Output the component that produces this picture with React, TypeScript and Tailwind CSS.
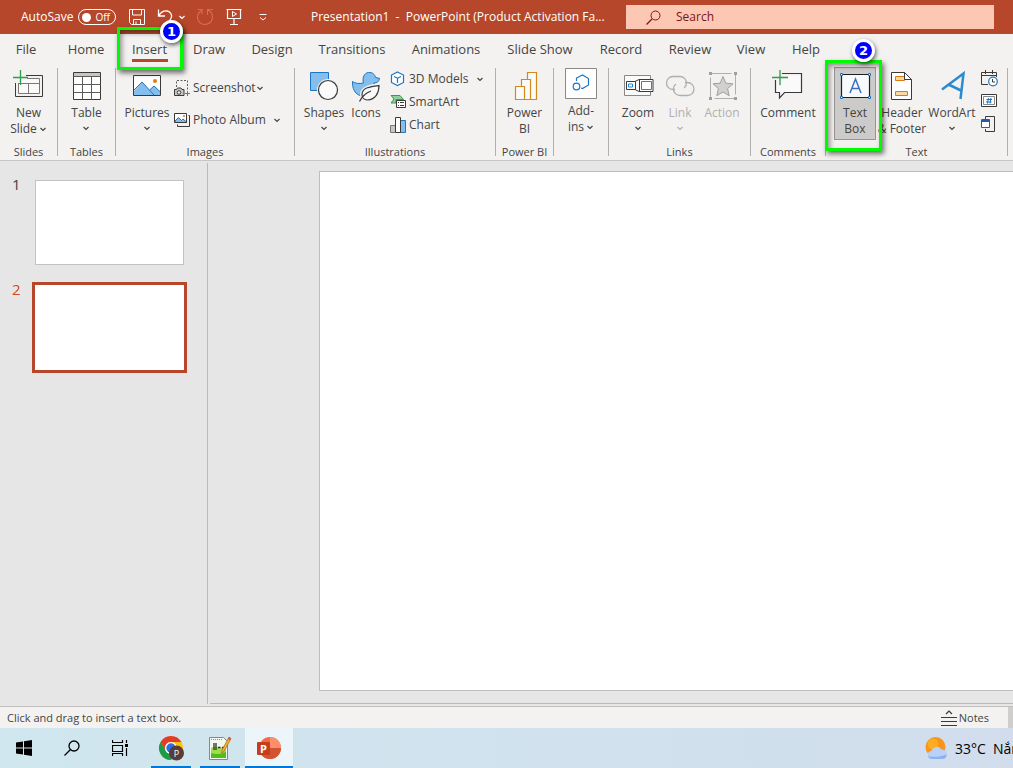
import type { ReactNode } from "react";

type TabItem = Readonly<{ name: string; width: string }>;

const tabs: TabItem[] = [
  { name: "File", width: "w-[52px]" },
  { name: "Home", width: "w-[68px]" },
  { name: "Insert", width: "w-[59px]" },
  { name: "Draw", width: "w-[60px]" },
  { name: "Design", width: "w-[66px]" },
  { name: "Transitions", width: "w-[94px]" },
  { name: "Animations", width: "w-[94px]" },
  { name: "Slide Show", width: "w-[94px]" },
  { name: "Record", width: "w-[68px]" },
  { name: "Review", width: "w-[70px]" },
  { name: "View", width: "w-[52px]" },
  { name: "Help", width: "w-[58px]" },
];

function Chevron({ className = "" }: Readonly<{ className?: string }>) {
  return (
    <svg width="7" height="5" viewBox="0 0 7 5" fill="none" stroke="currentColor" strokeWidth="1.2" className={className} aria-hidden="true">
      <path d="M.5 1l2.500 2.500L5.500 1" />
    </svg>
  );
}

function Icon({ size = 32, children }: Readonly<{ size?: number; children: ReactNode }>) {
  return (
    <svg width={size} height={size} viewBox={`0 0 ${size} ${size}`} fill="none" className="shrink-0" aria-hidden="true">
      {children}
    </svg>
  );
}

function Badge({ value, className }: Readonly<{ value: number; className: string }>) {
  return (
    <span
      className={`absolute z-20 flex size-[23px] items-center justify-center rounded-full border-[3px] border-white bg-[#0000fe] font-['DejaVu_Sans',sans-serif] text-[13px] leading-4 font-bold text-white shadow-[1px_2px_4px_rgba(0,0,0,0.6)] ${className}`}
    >
      {value}
    </span>
  );
}

function Outline({ className }: Readonly<{ className: string }>) {
  return (
    <span
      className={`pointer-events-none absolute z-10 border-[3px] border-[#00fa00] shadow-[2px_3px_5px_rgba(0,0,0,0.55),inset_2px_3px_5px_rgba(0,0,0,0.4)] ${className}`}
    />
  );
}

type GroupProps = Readonly<{ label?: string; width: string; bodyClass?: string; children: ReactNode }>;

function Group({ label, width, bodyClass = "justify-center", children }: GroupProps) {
  return (
    <>
      <section className={`flex shrink-0 flex-col ${width}`}>
        <div className={`flex flex-1 items-start pt-1 ${bodyClass}`}>{children}</div>
        {label ? <h2 className="text-center text-[11px] leading-4 whitespace-nowrap">{label}</h2> : null}
      </section>
      <div className="mt-0.5 mb-1 w-px shrink-0 bg-[#b1b0af]" />
    </>
  );
}

type BigButtonProps = Readonly<{
  icon: ReactNode;
  lines: string[];
  width: string;
  arrow?: "below" | "inline";
  disabled?: boolean;
}>;

function BigButton({ icon, lines, width, arrow, disabled = false }: BigButtonProps) {
  return (
    <button
      type="button"
      disabled={disabled}
      className={`flex shrink-0 flex-col items-center text-[12px] leading-4 whitespace-nowrap disabled:text-[#b1afad] ${width}`}
    >
      {icon}
      <span className="mt-[3px] flex flex-col items-center">
        {lines.map((line, i) => (
          <span key={line} className="flex items-center gap-[3px]">
            {line}
            {arrow === "inline" && i === lines.length - 1 ? <Chevron /> : null}
          </span>
        ))}
      </span>
      {arrow === "below" ? <Chevron className="mt-[5px]" /> : null}
    </button>
  );
}

type SmallButtonProps = Readonly<{ icon: ReactNode; label: string; arrow?: "near" | "far" }>;

function SmallButton({ icon, label, arrow }: SmallButtonProps) {
  return (
    <button type="button" className="flex items-center gap-[3px] text-[12px] leading-4 whitespace-nowrap">
      {icon}
      {label}
      {arrow ? <Chevron className={arrow === "far" ? "ml-[5px]" : "-ml-0.5"} /> : null}
    </button>
  );
}

function TitleBar() {
  return (
    <header className="flex h-[34px] shrink-0 items-center bg-[#b7472a] text-white">
      <span id="autosave" className="ml-[21px] w-[57px] text-[12px]">
        AutoSave
      </span>
      <button
        type="button"
        role="switch"
        aria-checked="false"
        aria-labelledby="autosave"
        className="flex h-4 w-[38px] items-center justify-between rounded-full border border-white pr-[5px] pl-[3px] text-[10px] leading-3"
      >
        <span className="size-[9px] rounded-full bg-white" />
        Off
      </button>
      <button type="button" aria-label="Save" className="ml-[5px] flex w-8 justify-center">
        <Icon size={18}>
          <path d="M1.500 1.500h15v15h-13l-2-2zM4.500 1.500V7h9V1.500M5.500 16.500v-5h7v5M8 16.500v-3" stroke="currentColor" />
        </Icon>
      </button>
      <button type="button" aria-label="Undo" className="flex w-6 justify-center">
        <Icon size={18}>
          <path d="M2.500 1.500V8H9M2.500 8C5 4 8 2.500 11 3c3 .5 5 3 4.500 6-.4 2.500-2.500 4-4.500 6.500" stroke="currentColor" strokeWidth="1.300" />
        </Icon>
      </button>
      <button type="button" aria-label="Undo history" className="flex w-[10px] justify-center">
        <Chevron />
      </button>
      <button type="button" aria-label="Redo" disabled className="flex w-9 justify-center text-[#e0694c]">
        <Icon size={18}>
          <path d="M11.500 7V1.500H17M11.500 2C15 3 16.500 6 16.500 9c0 4-3 7.500-7.500 7.500S1.500 13 1.500 9.500C1.500 6.500 3 4 5.500 2.500M1.500 1.500h4.500v4.500" stroke="currentColor" strokeWidth="1.200" />
        </Icon>
      </button>
      <button type="button" aria-label="Start from beginning" className="flex w-[22px] justify-center">
        <Icon size={18}>
          <path d="M1.500 1.500h15M2.500 1.500v9h13v-9M9 10.500v6M5 16.500h8" stroke="currentColor" strokeWidth="1.200" />
          <path d="M7.500 3.500l4 2.500-4 2.500z" stroke="currentColor" />
        </Icon>
      </button>
      <button type="button" aria-label="Customize toolbar" className="flex w-9 justify-center">
        <svg width="8" height="8" viewBox="0 0 8 8" fill="none" stroke="currentColor" aria-hidden="true">
          <path d="M.5 1.500h7M1 4.500l3 2.500 3-2.500" />
        </svg>
      </button>
      <h1 className="ml-[30px] flex-1 text-[12px] whitespace-pre">Presentation1&nbsp; -&nbsp; PowerPoint (Product Activation Fa...</h1>
      <label className="mr-[19px] flex h-6 w-[368px] items-center bg-[#fcc8b4] pl-5 text-[#7d1416]">
        <Icon size={15}>
          <circle cx="9.500" cy="5.500" r="4.500" stroke="currentColor" />
          <path d="M6 9l-5.500 5.500" stroke="currentColor" strokeWidth="1.200" />
        </Icon>
        <input
          type="search"
          aria-label="Search"
          placeholder="Search"
          className="ml-[15px] min-w-0 flex-1 bg-transparent text-[12px] outline-none placeholder:text-[#7d1416]"
        />
      </label>
    </header>
  );
}

function Tabs() {
  return (
    <nav className="flex h-8 shrink-0 text-[13px]">
      {tabs.map((tab) => (
        <div key={tab.name} className={`relative flex shrink-0 justify-center ${tab.width}`}>
          <button type="button" className="flex flex-col items-center pt-[5px] leading-5 whitespace-nowrap">
            {tab.name}
            {tab.name === "Insert" ? <span className="h-[3px] w-9 bg-[#b7472a]" /> : null}
          </button>
          {tab.name === "Insert" ? (
            <>
              <Outline className="-top-[7px] -left-[3px] h-[43px] w-[66px]" />
              <Badge value={1} className="-top-[14px] left-10" />
            </>
          ) : null}
        </div>
      ))}
    </nav>
  );
}

const newSlideIcon = (
  <Icon>
    <path d="M13 5.500h16.500v21h-27V13" stroke="#3b3a39" />
    <path d="M14 8.500h12.500v15h-21V13M5.500 13.500h21M15.500 13.500v10" stroke="#7a7977" fill="#fafafa" />
    <path d="M0 7.500h15M7.500 0v15" stroke="#2e9e4f" strokeWidth="1.300" />
  </Icon>
);

const tableIcon = (
  <Icon>
    <path d="M2.500 2.500h27v27h-27z" fill="#fff" stroke="#3b3a39" />
    <path d="M3 3h26v3.500H3z" fill="#c8c6c4" />
    <path d="M2.500 6.500h27M2.500 14.500h27M2.500 22.500h27M11.500 6.500v23M20.500 6.500v23" stroke="#5c5b5a" />
  </Icon>
);

const picturesIcon = (
  <Icon>
    <path d="M2.500 5.500h27v20h-27z" fill="#fff" />
    <path d="M3 21l8-9 12.500 13.500H3z" fill="#83beec" />
    <path d="M18.500 20l4.500-4 6.500 6v3.500h-6z" fill="#83beec" />
    <path d="M3 20l8-8 12.500 13.500M18.500 20l4.500-4 6.500 6" stroke="#1e76c2" />
    <circle cx="24" cy="11" r="2" fill="#e07b16" />
    <path d="M2.500 5.500h27v20h-27z" stroke="#3b3a39" />
  </Icon>
);

const shapesIcon = (
  <Icon>
    <path d="M2.500 2.500h18v18h-18z" fill="#83beec" stroke="#1e76c2" />
    <circle cx="20" cy="20" r="11" fill="#f3f2f1" />
    <circle cx="20" cy="20" r="9.500" fill="#fafafa" stroke="#3b3a39" strokeWidth="1.200" />
  </Icon>
);

const duckIcon = (
  <Icon>
    <path
      d="M2.500 11.500c3 2 6 2.500 11 1.500-1.500-5 .5-10 5-10.500 4-.5 6.500 2 7 5l4 .8c-.5 3.500-2.500 4.700-5.500 4.700 1.500 6-1 12-8 13C8 27 2 22 2.500 11.500z"
      fill="#83beec"
      stroke="#1e76c2"
    />
    <path d="M29 15.500c-8 1-17 2-17 9 0 3 2 5.500 5.500 5.500 8-.5 11.500-7 11.500-14.500z" fill="#fafafa" stroke="#f3f2f1" strokeWidth="4" />
    <path d="M29 15.500c-8 1-17 2-17 9 0 3 2 5.500 5.500 5.500 8-.5 11.500-7 11.500-14.500z" fill="#fafafa" stroke="#3b3a39" strokeWidth="1.200" />
    <path d="M9.500 31.500c2.500-5 6-8.500 11.500-10.500" stroke="#3b3a39" strokeWidth="1.200" />
  </Icon>
);

const powerBiIcon = (
  <Icon>
    <path d="M18.500 29.500v-27h9v27z" stroke="#d18a1c" fill="#fafafa" strokeWidth="1.200" />
    <path d="M12.500 29.500v-20h9v20z" stroke="#d18a1c" fill="#fafafa" strokeWidth="1.200" />
    <path d="M6.500 16.500h9v13h-9z" stroke="#d18a1c" fill="#fafafa" strokeWidth="1.200" />
  </Icon>
);

const addInsIcon = (
  <Icon>
    <path d="M.5.5h31v30H.5z" stroke="#8a8886" fill="#fff" />
    <path d="M11.500 13v-3l6-3 6 3.500v6.500l-6 3.500-1.500-.5" stroke="#1e76c2" strokeWidth="1.200" />
    <circle cx="11.500" cy="18.500" r="3.300" stroke="#1e76c2" strokeWidth="1.200" />
  </Icon>
);

const zoomIcon = (
  <Icon>
    <path d="M2.500 5.500h26v20h-26z" fill="#fafafa" stroke="#8a8886" />
    <path d="M4.500 11.500h8.500l4-2h14v12H17l-4-2H4.500z" fill="#fff" stroke="#3b3a39" />
    <path d="M13.500 11.500v8M17.500 9.500v12" stroke="#3b3a39" />
    <path d="M6.500 14h4v3h-4zM19.500 11.500h10v8h-10z" stroke="#2687c9" />
  </Icon>
);

const linkIcon = (
  <Icon>
    <path d="M11 19.500H9c-3.600 0-6.500-2.900-6.500-6.500S5.400 6.500 9 6.500h7c3.600 0 6.500 2.900 6.500 6.500 0 2-.9 3.800-2.300 5" stroke="#b1afad" strokeWidth="1.300" />
    <path d="M21 12.500h2.500c3.600 0 6.500 2.900 6.500 6.500s-2.900 6.500-6.500 6.500h-7.500c-3.600 0-6.500-2.900-6.500-6.500 0-2 .9-3.800 2.300-5" stroke="#b1afad" strokeWidth="1.300" />
  </Icon>
);

const actionIcon = (
  <Icon>
    <path d="M4.500 3.500h25v25h-25z" stroke="#b1afad" strokeDasharray="21 4" />
    <path d="M17 6.500l2.800 6.700 7.200.6-5.400 4.800 1.600 7.100L17 22l-6.200 3.700 1.600-7.100L7 13.800l7.200-.6z" fill="#d2d0ce" stroke="#a19f9d" />
    <path d="M3 2h3v3H3zM28 2h3v3h-3zM3 27h3v3H3zM28 27h3v3h-3z" fill="#a19f9d" />
  </Icon>
);

const commentIcon = (
  <Icon>
    <path d="M9.500 5.500h20v17h-16L8 28v-5.500H3.500V10" fill="#fafafa" />
    <path d="M10 3.500h19.500v19h-17L7.500 28v-5.500h-4V10" stroke="#3b3a39" strokeWidth="1.200" />
    <path d="M0 7.500h16M8 0v16" stroke="#f3f2f1" strokeWidth="3" />
    <path d="M0 7.500h16M8 0v15" stroke="#2e9e4f" strokeWidth="1.300" />
  </Icon>
);

const headerIcon = (
  <Icon>
    <path d="M5.500 2.500h13l7 7v20h-20z" fill="#fff" stroke="#3b3a39" />
    <path d="M9.500 6.500h9v4h-9z" fill="#fbd9a0" stroke="#dc7b12" />
    <path d="M18.500 2.500v7h7z" fill="#fff" stroke="#3b3a39" />
    <path d="M9.500 21.500h12v4h-12z" fill="#fbd9a0" stroke="#dc7b12" />
  </Icon>
);

const wordArtIcon = (
  <Icon>
    <path d="M6 19.500L27.500 3.500 24.500 29M12.500 14.500l12.500 6" stroke="#2b8bd0" strokeWidth="2.500" />
  </Icon>
);

const screenshotIcon = (
  <Icon size={16}>
    <path d="M2.500 7V.5h11V10" stroke="#5c5b5a" strokeDasharray="2 1.500" />
    <path d="M.5 9.500h2l1-1.500h3.500l1 1.500h2v6H.5z" fill="#c8c6c4" stroke="#3b3a39" />
    <circle cx="5" cy="12.500" r="1.800" fill="#f3f2f1" stroke="#3b3a39" />
    <path d="M11 13.500h5M13.500 11v5" stroke="#2e9e4f" />
  </Icon>
);

const albumIcon = (
  <Icon size={16}>
    <path d="M14.500 3.500h1v11h-12v-2" stroke="#3b3a39" />
    <path d="M.5 1.500h12v9H.5z" fill="#fff" />
    <path d="M1 9l3.500-3.500 3 3 1.500-1.500 3.500 3v.5H1z" fill="#83beec" stroke="#1e76c2" />
    <circle cx="10" cy="4" r="1" fill="#e07b16" />
    <path d="M.5 1.500h12v9H.5z" stroke="#3b3a39" />
  </Icon>
);

const modelsIcon = (
  <Icon size={16}>
    <path d="M7.500 1l6 3v7.500l-6 3-6-3V4z" fill="#fff" stroke="#1e76c2" strokeWidth="1.200" />
    <path d="M4 5.500l3.500 1.700L11 5.500M7.500 7v5" stroke="#1e76c2" strokeWidth="1.200" />
  </Icon>
);

const smartArtIcon = (
  <Icon size={16}>
    <path d="M1 1.500h9l3.500 4H6v3.500H1l3-4z" fill="#8ecf9b" stroke="#2e9e4f" />
    <path d="M6.500 6.500h9v7h-9z" fill="#fff" stroke="#3b3a39" />
    <path d="M8 8.500h1M10 8.500h4M8 11.500h1M10 11.500h4" stroke="#3b3a39" />
  </Icon>
);

const chartIcon = (
  <Icon size={16}>
    <path d="M.5 8.500h5v7h-5z" fill="#c8c6c4" stroke="#7a7977" />
    <path d="M10.500 3.500h5v12h-5z" fill="#83beec" stroke="#1e76c2" />
    <path d="M5.500.5h5v15h-5z" fill="#fff" stroke="#3b3a39" />
  </Icon>
);

function TextBoxButton() {
  return (
    <div className="relative -mt-[3px] w-[42px] shrink-0">
      <button
        type="button"
        aria-pressed="true"
        className="flex w-full flex-col items-center border border-[#979593] bg-[#cdcbc9] pt-0.5 pb-0.5 text-[12px] leading-4"
      >
        <Icon>
          <path d="M2.500 4.500h28v23h-28z" fill="#f6fafa" stroke="#1f1f1f" strokeWidth="1.200" />
          <path d="M11 23l5.500-14L22 23M13 18.500h7" stroke="#3c6fc4" strokeWidth="1.500" />
          <path
            d="M1.500 3.500h2v2h-2zM29.500 3.500h2v2h-2zM1.500 26.500h2v2h-2zM29.500 26.500h2v2h-2z"
            fill="#fff"
            stroke="#1e6fc0"
          />
        </Icon>
        <span className="mt-[3px]">Text</span>
        <span>Box</span>
      </button>
      <Outline className="-top-[7px] -left-[9px] h-[91px] w-[57px]" />
      <Badge value={2} className="-top-7 left-[18px]" />
    </div>
  );
}

function Ribbon() {
  return (
    <div className="flex h-[95px] shrink-0 border-b border-[#c8c6c4]">
      <Group label="Slides" width="w-[57px]">
        <BigButton icon={newSlideIcon} lines={["New", "Slide"]} width="w-full" arrow="inline" />
      </Group>
      <Group label="Tables" width="w-[57px]">
        <BigButton icon={tableIcon} lines={["Table"]} width="w-full" arrow="below" />
      </Group>
      <Group label="Images" width="w-[178px]" bodyClass="pl-1">
        <BigButton icon={picturesIcon} lines={["Pictures"]} width="w-[54px]" arrow="below" />
        <div className="flex flex-col gap-4 pt-[10px]">
          <SmallButton icon={screenshotIcon} label="Screenshot" arrow="near" />
          <SmallButton icon={albumIcon} label="Photo Album" arrow="far" />
        </div>
      </Group>
      <Group label="Illustrations" width="w-[200px]" bodyClass="pl-[5px]">
        <BigButton icon={shapesIcon} lines={["Shapes"]} width="w-12" arrow="below" />
        <BigButton icon={duckIcon} lines={["Icons"]} width="w-9" />
        <div className="ml-1.5 flex flex-col gap-[7px] pt-px">
          <SmallButton icon={modelsIcon} label="3D Models" arrow="far" />
          <SmallButton icon={smartArtIcon} label="SmartArt" />
          <SmallButton icon={chartIcon} label="Chart" />
        </div>
      </Group>
      <Group label="Power BI" width="w-[57px]">
        <BigButton icon={powerBiIcon} lines={["Power", "BI"]} width="w-full" />
      </Group>
      <Group width="w-[54px]">
        <div className="-mt-0.5 w-full">
          <BigButton icon={addInsIcon} lines={["Add-", "ins"]} width="w-full" arrow="inline" />
        </div>
      </Group>
      <Group label="Links" width="w-[141px]" bodyClass="pl-2">
        <BigButton icon={zoomIcon} lines={["Zoom"]} width="w-[42px]" arrow="below" />
        <BigButton icon={linkIcon} lines={["Link"]} width="w-[42px]" arrow="below" disabled />
        <BigButton icon={actionIcon} lines={["Action"]} width="w-[42px]" disabled />
      </Group>
      <Group label="Comments" width="w-[74px]">
        <BigButton icon={commentIcon} lines={["Comment"]} width="w-full" />
      </Group>
      <Group label="Text" width="w-[181px]" bodyClass="pl-2">
        <TextBoxButton />
        <BigButton icon={headerIcon} lines={["Header", "& Footer"]} width="w-[52px]" />
        <BigButton icon={wordArtIcon} lines={["WordArt"]} width="w-12" arrow="below" />
        <div className="ml-[5px] flex flex-col gap-[5px]">
          <button type="button" aria-label="Date and time">
            <Icon size={18}>
              <path d="M7 14.500H.5v-12h15V7M.5 5.500h15M4.500 0v4M11.500 0v4" stroke="#3b3a39" />
              <circle cx="12" cy="11.500" r="4.300" fill="#fff" stroke="#1e76c2" strokeWidth="1.200" />
              <path d="M11.500 9v3H14" stroke="#3b3a39" />
            </Icon>
          </button>
          <button type="button" aria-label="Slide number">
            <Icon size={18}>
              <path d="M.5 1.500h15v12H.5z" fill="#fff" stroke="#3b3a39" />
              <path d="M2.500 3.500h11v8h-11z" stroke="#8a8886" />
              <path d="M7.500 5L6.500 10.500M10 5L9 10.500M5.500 6.500h5.500M5 9h5.500" stroke="#1e76c2" />
            </Icon>
          </button>
          <button type="button" aria-label="Object">
            <Icon size={18}>
              <path d="M4.500 3V.5h9v15h-9V13" stroke="#3b3a39" />
              <path d="M.5 3.500h8v8h-8z" fill="#fff" stroke="#1e5fa8" />
              <path d="M.5 5h8" stroke="#1e5fa8" strokeWidth="2" />
            </Icon>
          </button>
        </div>
      </Group>
    </div>
  );
}

function Workspace() {
  return (
    <main className="flex min-h-0 flex-1 bg-[#e6e6e6]">
      <aside className="flex w-[207px] shrink-0 flex-col pt-[19px] text-[15px] leading-4">
        <div className="flex items-start">
          <span className="-mt-1 w-[35px] pl-3">1</span>
          <button type="button" aria-label="Slide 1" className="h-[85px] w-[149px] border border-[#c3c3c3] bg-white" />
        </div>
        <div className="mt-[17px] flex items-start text-[#d24726]">
          <span className="-mt-px w-8 pl-3">2</span>
          <button type="button" aria-label="Slide 2" className="h-[91px] w-[155px] border-[3px] border-[#b7472a] bg-white" />
        </div>
      </aside>
      <div className="my-0.5 w-px bg-[#bababa]" />
      <section className="mb-0.5 flex min-w-0 flex-1 flex-col">
        <div className="mt-[10px] mb-3 ml-[111px] flex-1 border border-r-0 border-[#bebebe] bg-white" />
        <div className="ml-0.5 h-px bg-[#bababa]" />
      </section>
    </main>
  );
}

function StatusBar() {
  return (
    <footer className="flex h-[22px] shrink-0 items-center border-t border-[#c0bfbe] text-[11px]">
      <p className="flex-1 pt-px pl-[7px]">Click and drag to insert a text box.</p>
      <button type="button" className="flex items-center gap-0.5 pt-px">
        <Icon size={16}>
          <path d="M5 4l3-3 3 3" stroke="#3b3a39" strokeWidth="1.200" />
          <path d="M0 7.500h16M0 11.500h16M0 15.500h16" stroke="#3b3a39" />
        </Icon>
        Notes
      </button>
      <div className="ml-[19px] w-[5px] self-stretch bg-[#d0cecc]" />
    </footer>
  );
}

type TaskButtonProps = Readonly<{ label: string; running?: boolean; active?: boolean; children: ReactNode }>;

function TaskButton({ label, running = false, active = false, children }: TaskButtonProps) {
  return (
    <button
      type="button"
      aria-label={label}
      className={`flex w-12 flex-col items-center ${active ? "bg-[#ebf5fa]" : ""}`}
    >
      <span className="flex flex-1 items-center pt-px">{children}</span>
      <span className={`h-0.5 ${active ? "w-full" : "w-10"} ${running ? "bg-[#0078d7]" : ""}`} />
    </button>
  );
}

function Taskbar() {
  return (
    <div className="flex h-10 shrink-0 overflow-hidden bg-linear-to-r from-[#d0e7ef] to-[#d1ddec]">
      <TaskButton label="Start">
        <Icon size={16}>
          <path d="M0 2.500l7-1v6H0zM8 1.300L16 0v7.500H8zM0 8.500h7v6l-7-1zM8 8.500h8V16l-8-1.200z" fill="#000" />
        </Icon>
      </TaskButton>
      <TaskButton label="Search">
        <Icon size={16}>
          <circle cx="10" cy="6" r="5" stroke="#000" strokeWidth="1.300" />
          <path d="M6.500 9.500L.5 15.500" stroke="#000" strokeWidth="1.300" />
        </Icon>
      </TaskButton>
      <TaskButton label="Task view">
        <Icon size={16}>
          <path d="M.5 0v2.500h10V0M.5 5.500h10v6H.5zM.5 16v-2.500h10V16M14.500 0v3M14.500 8v8" stroke="#000" strokeWidth="1.200" />
          <path d="M13 4h3v3h-3z" fill="#000" />
        </Icon>
      </TaskButton>
      <div className="ml-[3px] flex gap-px">
        <TaskButton label="Chrome" running>
          <Icon size={26}>
            <circle cx="13" cy="13" r="12" fill="#fbc116" />
            <path d="M2.600 7A12 12 0 0 1 23.400 7H13a6 6 0 0 0-5.200 9z" fill="#e33b2e" />
            <path d="M2.600 7l5.200 9a6 6 0 0 0 7 2.700L13 25A12 12 0 0 1 2.600 7z" fill="#1a9c4b" />
            <circle cx="13" cy="13" r="6" fill="#fff" />
            <circle cx="13" cy="13" r="4.700" fill="#2d6fe0" />
            <circle cx="18.500" cy="18" r="7.500" fill="#573c38" />
            <text x="18.500" y="21.500" textAnchor="middle" fontSize="9" fill="#fff">
              P
            </text>
          </Icon>
        </TaskButton>
        <TaskButton label="Notepad++" running>
          <Icon size={24}>
            <path d="M1.500 1.500h14l4 4v18h-18z" fill="#f4f6f1" stroke="#858a80" />
            <path d="M3 12c5-3 10 1 15-1v11H3z" fill="#9be04a" />
            <path d="M3 17c6 2 10 1 15-1v6H3z" fill="#52bd1a" />
            <path d="M3 3.500h11" stroke="#8d9288" strokeDasharray="1 1" />
            <path d="M6 7v7M8 7v7M10 11.500h2.500M14 11.500h2.500" stroke="#26331f" strokeWidth="1.300" />
            <path d="M21 1l2 1.500-7 13-2.500 1.500.5-3z" fill="#efb32b" stroke="#a8691d" strokeWidth=".7" />
            <path d="M21 1l2 1.500-1 2-2-1.500z" fill="#d65745" />
          </Icon>
        </TaskButton>
        <TaskButton label="PowerPoint" running active>
          <Icon size={24}>
            <circle cx="13" cy="12" r="11" fill="#ed6c47" />
            <path d="M13 1a11 11 0 0 1 11 11H13z" fill="#ff8f6b" />
            <path d="M2 12h22a11 11 0 0 1-22 0z" fill="#d35230" />
            <rect y="6" width="13" height="13" rx="1" fill="#c43e1c" />
            <text x="6.500" y="16.500" textAnchor="middle" fontSize="11" fontWeight="700" fill="#fff">
              P
            </text>
          </Icon>
        </TaskButton>
      </div>
      <button type="button" className="ml-auto flex w-[88px] items-center overflow-hidden text-left text-[14px] whitespace-nowrap text-black">
        <Icon size={22}>
          <circle cx="10.500" cy="10" r="10" fill="#f7941c" />
          <circle cx="8" cy="7" r="5.500" fill="#fcab23" />
          <path d="M7 22a4 4 0 0 1-.5-8 5.500 5.500 0 0 1 10-1.500A4.800 4.800 0 0 1 18 22z" fill="#b9d0f8" />
          <path d="M7 22a4 4 0 0 1-3.800-3c5 1.500 12 1 18.300-1.500A4.500 4.500 0 0 1 18 22z" fill="#8db2f0" />
        </Icon>
        <span className="ml-2 w-[38px] shrink-0">33°C</span>
        <span>Nắn</span>
      </button>
    </div>
  );
}

export default function App() {
  return (
    <div className="flex h-screen flex-col overflow-hidden bg-[#f3f2f1] font-['Segoe_UI','Open_Sans',sans-serif] text-[#444]">
      <TitleBar />
      <Tabs />
      <Ribbon />
      <Workspace />
      <StatusBar />
      <Taskbar />
    </div>
  );
}
